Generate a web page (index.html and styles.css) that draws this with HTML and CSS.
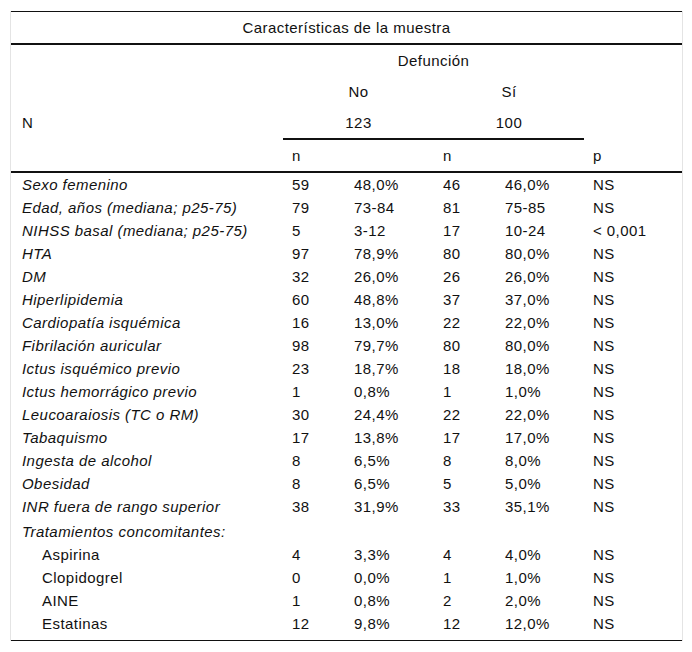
FILE: index.html
```html
<!DOCTYPE html>
<html lang="es">
<head>
<meta charset="utf-8">
<title>Características de la muestra</title>
<link rel="stylesheet" href="styles.css">
</head>
<body>
<div class="frame">
<table class="tbl">
<colgroup>
<col class="w-label"><col class="w-n"><col class="w-p1"><col class="w-n"><col class="w-p2"><col class="w-pv">
</colgroup>
<thead>
<tr class="r-title"><th colspan="6" class="title">Características de la muestra</th></tr>
<tr class="r-h"><th></th><th colspan="4" class="c">Defunción</th><th></th></tr>
<tr class="r-h"><th></th><th colspan="2" class="c">No</th><th colspan="2" class="c">Sí</th><th></th></tr>
<tr class="r-h r-num"><th class="l">N</th><th colspan="2" class="c ul">123</th><th colspan="2" class="c ul">100</th><th class="nul"></th></tr>
<tr class="r-h r-sub"><th></th><th class="l">n</th><th></th><th class="l">n</th><th></th><th class="l">p</th></tr>
</thead>
<tbody>
<tr><td class="lab it">Sexo femenino</td><td>59</td><td>48,0%</td><td>46</td><td>46,0%</td><td>NS</td></tr>
<tr><td class="lab it">Edad, años (mediana; p25-75)</td><td>79</td><td>73-84</td><td>81</td><td>75-85</td><td>NS</td></tr>
<tr><td class="lab it">NIHSS basal (mediana; p25-75)</td><td>5</td><td>3-12</td><td>17</td><td>10-24</td><td>&lt; 0,001</td></tr>
<tr><td class="lab it">HTA</td><td>97</td><td>78,9%</td><td>80</td><td>80,0%</td><td>NS</td></tr>
<tr><td class="lab it">DM</td><td>32</td><td>26,0%</td><td>26</td><td>26,0%</td><td>NS</td></tr>
<tr><td class="lab it">Hiperlipidemia</td><td>60</td><td>48,8%</td><td>37</td><td>37,0%</td><td>NS</td></tr>
<tr><td class="lab it">Cardiopatía isquémica</td><td>16</td><td>13,0%</td><td>22</td><td>22,0%</td><td>NS</td></tr>
<tr><td class="lab it">Fibrilación auricular</td><td>98</td><td>79,7%</td><td>80</td><td>80,0%</td><td>NS</td></tr>
<tr><td class="lab it">Ictus isquémico previo</td><td>23</td><td>18,7%</td><td>18</td><td>18,0%</td><td>NS</td></tr>
<tr><td class="lab it">Ictus hemorrágico previo</td><td>1</td><td>0,8%</td><td>1</td><td>1,0%</td><td>NS</td></tr>
<tr><td class="lab it">Leucoaraiosis (TC o RM)</td><td>30</td><td>24,4%</td><td>22</td><td>22,0%</td><td>NS</td></tr>
<tr><td class="lab it">Tabaquismo</td><td>17</td><td>13,8%</td><td>17</td><td>17,0%</td><td>NS</td></tr>
<tr><td class="lab it">Ingesta de alcohol</td><td>8</td><td>6,5%</td><td>8</td><td>8,0%</td><td>NS</td></tr>
<tr><td class="lab it">Obesidad</td><td>8</td><td>6,5%</td><td>5</td><td>5,0%</td><td>NS</td></tr>
<tr><td class="lab it">INR fuera de rango superior</td><td>38</td><td>31,9%</td><td>33</td><td>35,1%</td><td>NS</td></tr>
<tr class="r-group"><td class="lab it">Tratamientos concomitantes:</td><td></td><td></td><td></td><td></td><td></td></tr>
<tr><td class="lab ind">Aspirina</td><td>4</td><td>3,3%</td><td>4</td><td>4,0%</td><td>NS</td></tr>
<tr><td class="lab ind">Clopidogrel</td><td>0</td><td>0,0%</td><td>1</td><td>1,0%</td><td>NS</td></tr>
<tr><td class="lab ind">AINE</td><td>1</td><td>0,8%</td><td>2</td><td>2,0%</td><td>NS</td></tr>
<tr class="r-end"><td class="lab ind">Estatinas</td><td>12</td><td>9,8%</td><td>12</td><td>12,0%</td><td>NS</td></tr>
</tbody>
</table>
</div>
</body>
</html>
```

FILE: styles.css
```css
html, body {
  margin: 0;
  padding: 0;
  background: #ffffff;
}

body {
  font-family: "Liberation Sans", Arial, sans-serif;
  font-size: 15px;
  letter-spacing: 0.45px;
  color: #111111;
}

.frame {
  margin: 11px 0 0 10px;
  width: 671px;
  border-left: 1px solid #e4e4e4;
  border-right: 1px solid #e4e4e4;
}

.tbl {
  width: 671px;
  table-layout: fixed;
  border-collapse: separate;
  border-spacing: 0;
  border-top: 1px solid #111111;
  border-bottom: 1px solid #111111;
}

.w-label { width: 272px; }
.w-n { width: 62px; }
.w-p1 { width: 89px; }
.w-p2 { width: 88px; }
.w-pv { width: 98px; }

.tbl th,
.tbl td {
  padding: 0 0 0 9px;
  font-weight: normal;
  text-align: left;
  vertical-align: middle;
  white-space: nowrap;
}

.tbl th.title {
  padding: 0;
  text-align: center;
  line-height: 31px;
  border-bottom: 2px solid #111111;
}

.r-h th {
  line-height: 31px;
}

.tbl th.c {
  padding: 0;
  text-align: center;
}

.tbl th.l:first-child {
  padding-left: 11px;
}

.r-num th {
  border-bottom: 2px solid transparent;
}

.r-num th.ul {
  border-bottom: 2px solid #111111;
}

.r-sub th {
  border-bottom: 2px solid #111111;
}

.tbl td {
  line-height: 23px;
}

.tbl td.lab {
  padding-left: 11px;
}

.tbl td.it {
  font-style: italic;
}

.tbl td.ind {
  padding-left: 31px;
}

.r-group td {
  padding-top: 2px;
}

.r-end td {
  padding-bottom: 5px;
}
```
